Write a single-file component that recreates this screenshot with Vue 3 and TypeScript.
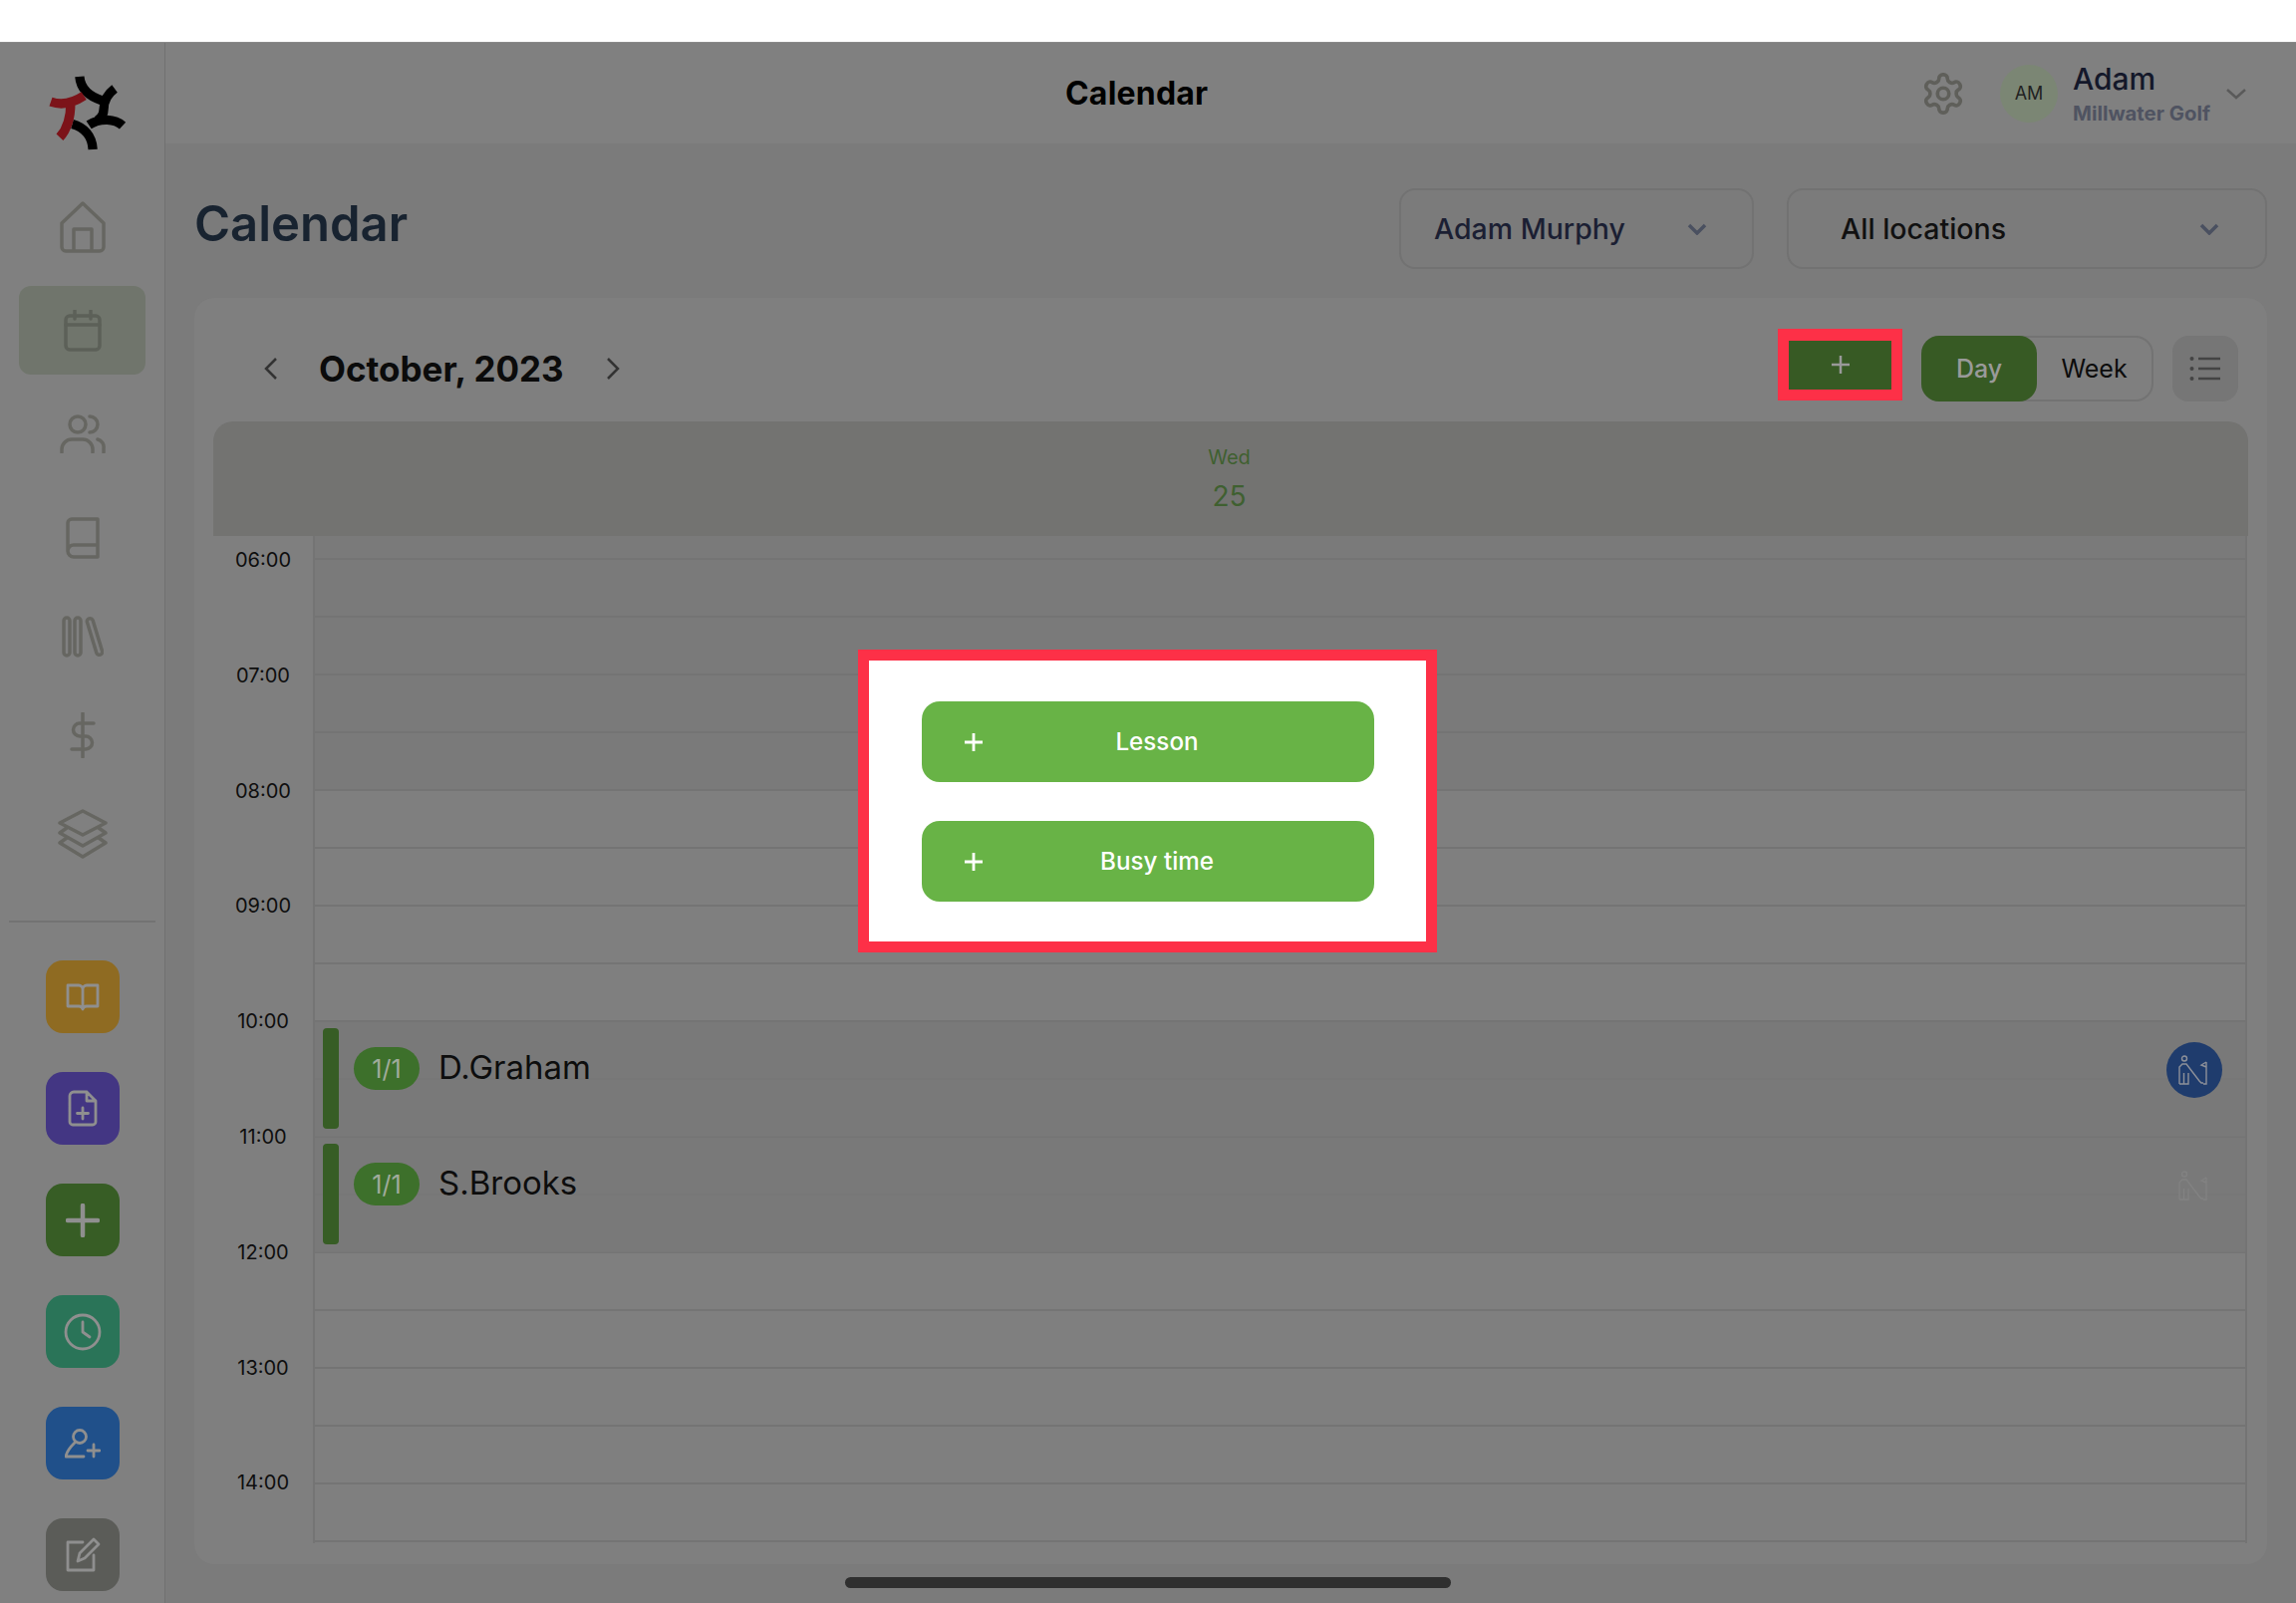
<template>
  <div class="screen">
    <div class="status"></div>
    <div class="body">
      <aside class="sidebar">
        <svg class="logo" viewBox="50 40 250 250" width="83" height="83" fill="none" stroke-width="28">
          <path stroke="#000" d="M152 52C155 90 180 112 222 125M258 88C235 105 225 125 225 150C225 165 220 175 205 185M282 200C260 180 215 175 180 198M130 195C165 205 190 230 192 272" />
          <path stroke="#7c1319" d="M65 128C100 140 135 130 165 110M125 130C125 170 115 210 92 235" />
        </svg>

        <nav class="nav">
          <div class="nav-item">
            <svg width="46" height="52" viewBox="0 0 46 52"><path d="M2 22L23 2L44 22V46a4 4 0 0 1-4 4H6a4 4 0 0 1-4-4ZM14 50V28H32V50" /></svg>
          </div>
          <div class="nav-item active">
            <svg width="38" height="42" viewBox="0 0 38 42"><rect x="2" y="6" width="34" height="34" rx="4" /><path d="M2 15H36M11 1V9M27 1V9" /></svg>
          </div>
          <div class="nav-item">
            <svg width="46" height="39" viewBox="0 0 46 39"><circle cx="18" cy="10" r="8" /><path d="M2 38V35a10 10 0 0 1 10-10H23a10 10 0 0 1 10 10V38M30 2a8 8 0 0 1 0 16M38 25a8 8 0 0 1 6 9V38" /></svg>
          </div>
          <div class="nav-item">
            <svg width="34" height="42" viewBox="0 0 34 42"><path d="M6 2H32V40H8a6 6 0 0 1-6-6V6a4 4 0 0 1 4-4ZM2 34a6 6 0 0 1 6-6H32" /></svg>
          </div>
          <div class="nav-item tight">
            <svg width="42" height="42" viewBox="0 0 42 42"><rect x="2" y="2" width="6" height="38" rx="3" /><rect x="13" y="2" width="6" height="38" rx="3" /><rect x="30" y="2" width="6" height="38" rx="3" transform="rotate(-17 33 21)" /></svg>
          </div>
          <div class="nav-item tight">
            <svg width="26" height="46" viewBox="0 0 26 46"><path d="M13 1V45M24 11H10a6.500 6.500 0 0 0 0 13H16a6.500 6.500 0 0 1 0 13H2" /></svg>
          </div>
          <div class="nav-item tight">
            <svg width="50" height="50" viewBox="0 0 50 50"><path d="M25 2L48 14L25 26L2 14ZM9 19L2 24L25 37L48 24L41 19M9 29L2 34L25 48L48 34L41 29" /></svg>
          </div>
        </nav>

        <div class="divider"></div>

        <div class="shortcuts">
          <div class="shortcut" style="background: #8f6b22">
            <svg width="34" height="30" viewBox="0 0 34 30"><path d="M17 7a4 4 0 0 0-4-4H2V24H13a4 4 0 0 1 4 3a4 4 0 0 1 4-3H32V3H21a4 4 0 0 0-4 4V27" /></svg>
          </div>
          <div class="shortcut" style="background: #433683">
            <svg width="30" height="38" viewBox="0 0 30 38"><path d="M6 2H19L28 11V32a3 3 0 0 1-3 3H5a3 3 0 0 1-3-3V6a4 4 0 0 1 4-4ZM19 2V11H28M15 18V29M9.500 23.500H20.500" /></svg>
          </div>
          <div class="shortcut" style="background: #375d25">
            <svg width="34" height="34" viewBox="0 0 34 34"><path class="thick" d="M17 2V32M2 17H32" /></svg>
          </div>
          <div class="shortcut" style="background: #2a7458">
            <svg width="38" height="38" viewBox="0 0 38 38"><circle cx="19" cy="19" r="17" /><path d="M19 9V19L26 24" /></svg>
          </div>
          <div class="shortcut" style="background: #20508a">
            <svg width="36" height="30" viewBox="0 0 36 30"><circle cx="15" cy="8" r="6.500" /><path d="M10 14C6 18 2 22 1 28H19M29 16V28M23 22H35" /></svg>
          </div>
          <div class="shortcut" style="background: #5b5c58">
            <svg width="36" height="36" viewBox="0 0 36 36"><path d="M18 5H3V33H29V18M13 24L15 16L29 2L34 7L20 21Z" /></svg>
          </div>
        </div>
      </aside>

      <main class="main">
        <header class="topbar">
          <div class="topbar-title">Calendar</div>
          <div class="account">
            <svg class="gear" width="46" height="46" viewBox="0 0 24 24">
              <path d="M12.220 2h-.44a2 2 0 0 0-2 2v.18a2 2 0 0 1-1 1.730l-.43.25a2 2 0 0 1-2 0l-.15-.08a2 2 0 0 0-2.730.73l-.22.38a2 2 0 0 0 .73 2.730l.15.1a2 2 0 0 1 1 1.720v.51a2 2 0 0 1-1 1.740l-.15.09a2 2 0 0 0-.73 2.730l.22.38a2 2 0 0 0 2.730.73l.15-.08a2 2 0 0 1 2 0l.43.25a2 2 0 0 1 1 1.730V20a2 2 0 0 0 2 2h.44a2 2 0 0 0 2-2v-.18a2 2 0 0 1 1-1.730l.43-.25a2 2 0 0 1 2 0l.15.08a2 2 0 0 0 2.730-.73l.22-.39a2 2 0 0 0-.73-2.730l-.15-.08a2 2 0 0 1-1-1.740v-.5a2 2 0 0 1 1-1.740l.15-.09a2 2 0 0 0 .73-2.730l-.22-.38a2 2 0 0 0-2.730-.73l-.15.08a2 2 0 0 1-2 0l-.43-.25a2 2 0 0 1-1-1.730V4a2 2 0 0 0-2-2z" />
              <circle cx="12" cy="12" r="3" />
            </svg>
            <div class="avatar">AM</div>
            <div class="who">
              <div class="who-name">Adam</div>
              <div class="who-club">Millwater Golf</div>
            </div>
            <svg class="who-chevron" width="22" height="12" viewBox="0 0 22 12"><path d="M2 2L11 10L20 2" /></svg>
          </div>
        </header>

        <div class="page-head">
          <h1>Calendar</h1>
          <div class="filters">
            <div class="select coach">
              <span>Adam Murphy</span>
              <svg width="20" height="12" viewBox="0 0 20 12"><path d="M2 2L10 10L18 2" /></svg>
            </div>
            <div class="select locations">
              <span>All locations</span>
              <svg width="20" height="12" viewBox="0 0 20 12"><path d="M2 2L10 10L18 2" /></svg>
            </div>
          </div>
        </div>

        <section class="card">
          <div class="toolbar">
            <svg class="arrow" width="14" height="24" viewBox="0 0 14 24"><path d="M12 2L2 12L12 22" /></svg>
            <div class="month">October, 2023</div>
            <svg class="arrow" width="14" height="24" viewBox="0 0 14 24"><path d="M2 2L12 12L2 22" /></svg>
            <div class="tools">
              <button class="add">
                <svg width="20" height="20" viewBox="0 0 20 20"><path d="M10 1V19M1 10H19" /></svg>
              </button>
              <div class="segment">
                <div class="seg-on">Day</div>
                <div class="seg-off">Week</div>
              </div>
              <div class="list-btn">
                <svg width="32" height="26" viewBox="0 0 32 26">
                  <path d="M9 3H31M9 13H31M9 23H31" />
                  <circle cx="2.500" cy="3" r="2" /><circle cx="2.500" cy="13" r="2" /><circle cx="2.500" cy="23" r="2" />
                </svg>
              </div>
            </div>
          </div>

          <div class="day-head">
            <div class="day-name">Wed</div>
            <div class="day-num">25</div>
          </div>

          <div class="schedule">
            <div class="times">
              <div v-for="t in hours" :key="t" class="time">{{ t }}</div>
            </div>
            <div class="grid">
              <div
                v-for="(r, i) in rows"
                :key="i"
                class="row"
                :class="{ first: i === 0, busy: r.busy }"
              ></div>

              <div
                v-for="e in lessons"
                :key="e.name"
                class="lesson"
                :style="{ top: hourTop(e.hour) + 'px' }"
              >
                <div class="lesson-bar"></div>
                <div class="pill">1/1</div>
                <div class="lesson-name">{{ e.name }}</div>
                <div class="golf" :class="{ ghost: !e.booked }">
                  <svg width="32" height="31" viewBox="0 0 32 31">
                    <circle cx="6" cy="3.500" r="2.500" />
                    <path d="M1 29V12L4 9H8L21 26L23 28H25M1 29H10V18M5.500 29V18M28 7V29H25M28 7L23 10L28 12" />
                  </svg>
                </div>
              </div>
            </div>
          </div>
        </section>
      </main>
    </div>

    <div class="highlight"></div>

    <div class="popup">
      <button v-for="a in actions" :key="a" class="popup-btn">
        <svg width="20" height="20" viewBox="0 0 20 20"><path d="M10 1V19M1 10H19" /></svg>
        <span>{{ a }}</span>
      </button>
    </div>

    <div class="home-bar"></div>
  </div>
</template>

<script setup lang="ts">
const hours: string[] = ['06:00', '07:00', '08:00', '09:00', '10:00', '11:00', '12:00', '13:00', '14:00']

// half hour rows, the first one is cut off by the day header
const rows = Array.from({ length: 18 }, (_, i) => ({ busy: i < 5 }))

const lessons = [
  { name: 'D.Graham', hour: 10, booked: true },
  { name: 'S.Brooks', hour: 11, booked: false },
]

const actions: string[] = ['Lesson', 'Busy time']

function hourTop(hour: number): number {
  return 24 + (hour - 6) * 116
}
</script>

<style>
body {
  background: #fff;
}
</style>

<style scoped>
.screen {
  position: relative;
  width: 2304px;
  height: 1609px;
  display: flex;
  flex-direction: column;
  overflow: hidden;
  font-family: Inter, "Liberation Sans", sans-serif;
  color: #111;
}

.status {
  height: 43px;
  flex: none;
  background: #fff;
  border-bottom: 1px solid #8a8a8a;
  box-sizing: border-box;
}

.body {
  flex: 1;
  display: flex;
  min-height: 0;
}

/* sidebar */
.sidebar {
  width: 166px;
  flex: none;
  box-sizing: border-box;
  border-right: 1px solid #717171;
  background: #808080;
  display: flex;
  flex-direction: column;
  align-items: center;
  padding-top: 30px;
}

.logo {
  flex: none;
  margin-left: 10px;
}

.nav {
  margin-top: 27px;
  display: flex;
  flex-direction: column;
  gap: 15px;
  width: 127px;
}

.nav-item {
  height: 89px;
  display: flex;
  align-items: center;
  justify-content: center;
  border-radius: 12px;
}

.nav-item.tight {
  margin-top: -5px;
}

.nav-item svg {
  fill: none;
  stroke: #666661;
  stroke-width: 3.5;
  stroke-linejoin: round;
  stroke-linecap: round;
}

.nav-item.active {
  background: #70756c;
}

.nav-item.active svg {
  stroke: #5c6058;
}

.divider {
  width: 147px;
  height: 2px;
  margin-top: 43px;
  background: #737373;
}

.shortcuts {
  margin-top: 38px;
  display: flex;
  flex-direction: column;
  gap: 39px;
}

.shortcut {
  width: 74px;
  height: 73px;
  border-radius: 17px;
  display: flex;
  align-items: center;
  justify-content: center;
}

.shortcut svg {
  fill: none;
  stroke: #8f8f8f;
  stroke-width: 2.8;
  stroke-linejoin: round;
  stroke-linecap: round;
}

.shortcut svg .thick {
  stroke-width: 4.5;
}

/* main column */
.main {
  flex: 1;
  min-width: 0;
  display: flex;
  flex-direction: column;
  background: #7b7b7b;
}

.topbar {
  height: 101px;
  flex: none;
  background: #808080;
  display: flex;
  align-items: center;
  padding-left: 903px;
  padding-right: 49px;
}

.topbar-title {
  font-size: 32px;
  font-weight: 700;
  color: #000;
  letter-spacing: 0.2px;
}

.account {
  margin-left: auto;
  display: flex;
  align-items: center;
}

.gear {
  fill: none;
  stroke: #5f5f5a;
  stroke-width: 1.9;
  stroke-linejoin: round;
  margin-right: 34px;
}

.avatar {
  width: 58px;
  height: 58px;
  border-radius: 50%;
  background: #7b8674;
  font-size: 18px;
  color: #222;
  display: flex;
  align-items: center;
  justify-content: center;
}

.who {
  margin-left: 15px;
  padding-top: 2px;
  width: 137px;
}

.who-name {
  font-size: 30px;
  font-weight: 500;
  color: #14182a;
  line-height: 36px;
}

.who-club {
  font-size: 20.300px;
  font-weight: 700;
  color: #4f5361;
  line-height: 28px;
  margin-top: 3px;
  white-space: nowrap;
}

.who-chevron {
  margin-left: 16px;
  fill: none;
  stroke: #5a5a5a;
  stroke-width: 2.5;
}

.page-head {
  height: 155px;
  flex: none;
  display: flex;
  padding: 0 29px;
}

h1 {
  margin: 0;
  padding-top: 56px;
  font-size: 49px;
  font-weight: 600;
  line-height: 50px;
  color: #182330;
}

.filters {
  margin-left: auto;
  padding-top: 45px;
  display: flex;
  gap: 33px;
}

.select {
  height: 81px;
  box-sizing: border-box;
  border: 2px solid #727272;
  border-radius: 16px;
  display: flex;
  align-items: center;
  justify-content: space-between;
  font-size: 28.500px;
  font-weight: 500;
}

.select svg {
  fill: none;
  stroke: #4a5060;
  stroke-width: 3.5;
}

.coach {
  width: 356px;
  padding: 0 45px 0 33px;
  color: #1b1f33;
}

.locations {
  width: 482px;
  padding: 0 46px 0 52px;
}

/* card */
.card {
  width: 2080px;
  margin: 0 29px;
  height: 1271px;
  box-sizing: border-box;
  flex: none;
  padding: 0 19px;
  background: #7f7f7f;
  border-radius: 20px;
  display: flex;
  flex-direction: column;
}

.toolbar {
  height: 124px;
  flex: none;
  box-sizing: border-box;
  padding: 17px 10px 0 51px;
  display: flex;
  align-items: center;
}

.arrow {
  fill: none;
  stroke: #333;
  stroke-width: 2.5;
}

.month {
  margin: 0 42px 0 41px;
  font-size: 35px;
  font-weight: 700;
  color: #0b0b0b;
}

.tools {
  margin-left: auto;
  display: flex;
  align-items: center;
}

.add {
  width: 103px;
  height: 49px;
  margin: 0 30px 7px 0;
  padding: 0;
  border: none;
  background: #375a24;
  display: flex;
  align-items: center;
  justify-content: center;
}

.add svg {
  fill: none;
  stroke: #999;
  stroke-width: 2.5;
}

.segment {
  width: 233px;
  height: 66px;
  box-sizing: border-box;
  border: 2px solid #737373;
  border-radius: 18px;
  display: flex;
  margin-right: 19px;
  font-size: 25px;
}

.seg-on {
  width: 116px;
  margin: -2px 0 -2px -2px;
  border-radius: 18px;
  background: #375a24;
  color: #9a9a9a;
  font-weight: 500;
  display: flex;
  align-items: center;
  justify-content: center;
}

.seg-off {
  flex: 1;
  color: #0c0c0c;
  font-weight: 400;
  display: flex;
  align-items: center;
  justify-content: center;
}

.list-btn {
  width: 66px;
  height: 66px;
  border-radius: 16px;
  background: #767676;
  display: flex;
  align-items: center;
  justify-content: center;
}

.list-btn path {
  fill: none;
  stroke: #444;
  stroke-width: 2.5;
}

.list-btn circle {
  fill: #444;
}

.day-head {
  height: 115px;
  flex: none;
  background: #737371;
  border-radius: 20px 20px 0 0;
  box-sizing: border-box;
  padding: 22px 3px 0 0;
  text-align: center;
  color: #3f6030;
}

.day-name {
  font-size: 20px;
  line-height: 28px;
}

.day-num {
  margin-top: 7px;
  font-size: 28px;
  line-height: 36px;
}

.schedule {
  display: flex;
  height: 1011px;
  flex: none;
}

.times {
  width: 102px;
  flex: none;
  box-sizing: border-box;
  border-right: 2px solid #747474;
  padding-top: 10px;
  display: flex;
  flex-direction: column;
  gap: 87.800px;
}

.time {
  height: 28px;
  line-height: 28px;
  text-align: center;
  font-size: 20px;
  color: #0e0e0e;
}

.grid {
  position: relative;
  width: 1939px;
  flex: none;
  box-sizing: border-box;
  border-right: 2px solid #747474;
}

.row {
  height: 58px;
  box-sizing: border-box;
  border-bottom: 2px solid #747474;
}

.row.first {
  height: 24px;
}

.row.busy {
  background: #7a7a7a;
}

.lesson {
  position: absolute;
  left: 0;
  right: 0;
  height: 116px;
  box-sizing: border-box;
  padding-left: 8px;
  background: rgba(120, 120, 120, 0.85);
  border-bottom: 1px solid #747474;
  display: flex;
  align-items: flex-start;
}

.lesson-bar {
  width: 16px;
  height: 101px;
  margin-top: 6px;
  border-radius: 4px;
  background: #375d25;
}

.pill {
  width: 66px;
  height: 43px;
  margin: 25px 0 0 15px;
  border-radius: 22px;
  background: #3d702b;
  color: #a0ab9b;
  font-size: 25px;
  display: flex;
  align-items: center;
  justify-content: center;
}

.lesson-name {
  margin: 24px 0 0 19px;
  line-height: 43px;
  font-size: 33px;
  color: #0d0d0d;
}

.golf {
  position: absolute;
  top: 20px;
  right: 23px;
  width: 56px;
  height: 56px;
  border-radius: 50%;
  background: #1f3c6d;
  display: flex;
  align-items: center;
  justify-content: center;
}

.golf svg {
  fill: none;
  stroke: #8e9199;
  stroke-width: 1.4;
}

.golf.ghost {
  background: none;
}

.golf.ghost svg {
  stroke: #828282;
}

/* red marker round the add button */
.highlight {
  position: absolute;
  left: 1784px;
  top: 330px;
  width: 125px;
  height: 72px;
  box-sizing: border-box;
  border: solid #fd3047;
  border-width: 12px 11px 11px;
}

.popup {
  position: absolute;
  left: 861px;
  top: 652px;
  width: 581px;
  height: 304px;
  box-sizing: border-box;
  border: 11px solid #fd3047;
  background: #fff;
  padding: 41px 52px 0 53px;
  display: flex;
  flex-direction: column;
  gap: 39px;
}

.popup-btn {
  height: 81px;
  width: 454px;
  flex: none;
  padding: 0 44px 0 42px;
  border: none;
  border-radius: 18px;
  background: #68b346;
  color: #fff;
  display: flex;
  align-items: center;
  font-family: inherit;
  font-size: 24.200px;
  font-weight: 500;
}

.popup-btn svg {
  flex: none;
  fill: none;
  stroke: #fff;
  stroke-width: 2.8;
}

.popup-btn span {
  flex: 1;
  text-align: center;
  padding-bottom: 1px;
}

.home-bar {
  position: absolute;
  left: 848px;
  bottom: 15px;
  width: 608px;
  height: 11px;
  border-radius: 6px;
  background: #2f2f2f;
}
</style>
